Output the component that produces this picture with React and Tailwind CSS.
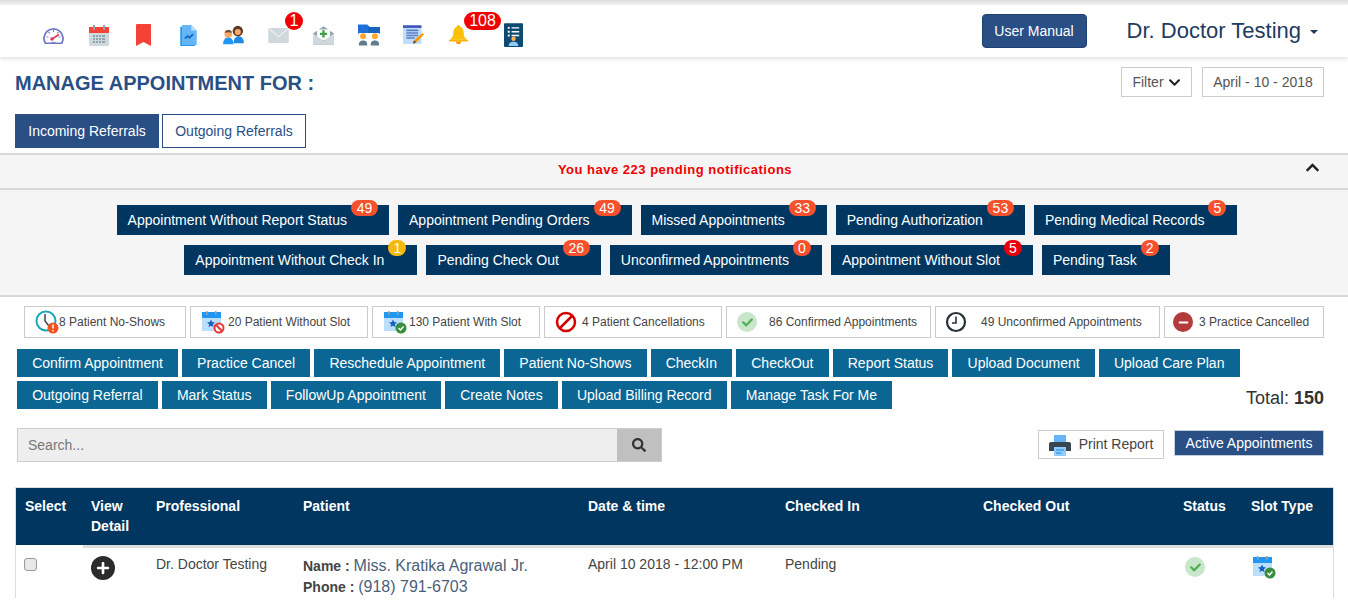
import { FaChevronDown, FaChevronUp, FaSearch, FaPlus, FaCheck, FaMinus } from 'react-icons/fa'

const Gauge = () => (
  <svg width="21" height="17" viewBox="2 1 20 17">
    <path d="M4 17.500a9.500 9.500 0 1 1 16 0z" fill="#fff" stroke="#6f78c8" strokeWidth="1.800" />
    <path d="M5 11h2M17 11h2M12 4v2M7 6l1.400 1.400M17 6l-1.400 1.400" stroke="#7c84cc" strokeWidth="1.200" />
    <path d="M10.500 13 17.500 8.500" stroke="#e53958" strokeWidth="1.600" />
    <circle cx="10.500" cy="13" r="1.800" fill="#e53958" />
    <path d="M10 16.500h4" stroke="#7c84cc" strokeWidth="1.200" />
  </svg>
)

const CalendarGrey = () => (
  <svg width="20" height="21" viewBox="2 1 20 21">
    <rect x="2" y="3" width="20" height="19" rx="1" fill="#cfd8dc" />
    <rect x="2" y="3" width="20" height="6" fill="#f44336" />
    <rect x="6" y="1" width="2" height="5" fill="#90a4ae" />
    <rect x="16" y="1" width="2" height="5" fill="#90a4ae" />
    <path d="M6 11h12v2H6zM6 14h12v2H6zM6 17h12v2H6z" fill="#90a4ae" />
    <path d="M8 11h1v8H8zM11 11h1v8h-1zM14 11h1v8h-1z" fill="#cfd8dc" />
  </svg>
)

const Bookmark = () => (
  <svg width="15" height="22" viewBox="0 0 15 22">
    <path d="M1 0h13a1 1 0 0 1 1 1v21l-7.500-4L0 22V1a1 1 0 0 1 1-1z" fill="#f44336" />
  </svg>
)

const DocChart = () => (
  <svg width="17" height="21" viewBox="3 1 18 23">
    <path d="M5 1h10l6 6v16H5z" fill="#64b5f6" />
    <path d="M3 3h2v20h14v1H3z" fill="#2196f3" />
    <path d="M15 1l6 6h-6z" fill="#bbdefb" />
    <path d="M8 16l3-3 2 2 4-4" fill="none" stroke="#1565c0" strokeWidth="2" />
  </svg>
)

const People = () => (
  <svg width="23" height="20" viewBox="0 1 26 23">
    <path d="M13 22c0-5 3-8 6-8s6 3 6 8z" fill="#1e88e5" />
    <circle cx="18" cy="8" r="6" fill="#5d3a28" />
    <circle cx="18" cy="9" r="3.500" fill="#f6a96b" />
    <path d="M1 23c0-5 3-8 6-8s6 3 6 8z" fill="#2196f3" />
    <circle cx="7" cy="11" r="4.500" fill="#f6a96b" />
    <path d="M3 10c0-4 8-5 8 0-3-1-5-1-8 0z" fill="#6d4c33" />
  </svg>
)

const Mail = () => (
  <svg width="21" height="15" viewBox="0 2 26 19">
    <rect x="0" y="2" width="26" height="19" rx="1.500" fill="#cfd8dc" />
    <path d="M1 3l12 10L25 3" fill="none" stroke="#eceff1" strokeWidth="1.500" />
  </svg>
)

const MailOpen = () => (
  <svg width="21" height="21" viewBox="0 1 26 23">
    <path d="M0 10 13 1l13 9v14H0z" fill="#90a4ae" />
    <rect x="5" y="5" width="16" height="13" fill="#fff" />
    <path d="M0 10l13 9 13-9v14H0z" fill="#cfd8dc" />
    <path d="M11.500 6h3v3h3v3h-3v3h-3v-3h-3V9h3z" fill="#43a047" />
  </svg>
)

const FolderPeople = () => (
  <svg width="22" height="22" viewBox="0 1 26 25">
    <path d="M0 1h11l3 3h12v11H0z" fill="#1e6fd9" />
    <path d="M12 4h14v11H12z" fill="#1565c0" />
    <rect x="0" y="11" width="26" height="5" rx="2" fill="#fff" />
    <circle cx="6" cy="15" r="3.500" fill="#ffa726" />
    <circle cx="20" cy="15" r="3.500" fill="#ffa726" />
    <path d="M1 26c0-5 2-6 5-6s5 1 5 6zM15 26c0-5 2-6 5-6s5 1 5 6z" fill="#607d8b" />
  </svg>
)

const Notepad = () => (
  <svg width="21" height="22" viewBox="0 1 25 23">
    <rect x="0" y="1" width="22" height="22" fill="#bbdefb" />
    <rect x="0" y="1" width="22" height="3" fill="#3f51b5" />
    <path d="M4 7h14M4 10h14M4 13h14M4 16h10" stroke="#5c7fc4" strokeWidth="1.800" />
    <path d="M12 23l1-4 10-9 2 2-9 9z" fill="#ff9800" />
    <path d="M12 23l1-4 3 2z" fill="#5d4037" />
  </svg>
)

const Bell = () => (
  <svg width="19" height="20" viewBox="0 1 22 23">
    <path d="M11 1c1.500 0 2 1 2 2 3 1 4 4 4 7 0 4 1 6 4 8H1c3-2 4-4 4-8 0-3 1-6 4-7 0-1 .500-2 2-2z" fill="#ffc107" />
    <rect x="0" y="18" width="22" height="2" rx="1" fill="#ffb300" />
    <path d="M8 20h6a3 3 0 0 1-6 0z" fill="#ff9800" />
  </svg>
)

const Contact = () => (
  <svg width="19" height="24" viewBox="0 0 20 25">
    <rect width="20" height="25" rx="1" fill="#0d4a72" />
    <path d="M4 4h2v2H4zM4 8h2v2H4zM4 12h2v2H4z" fill="#fff" />
    <path d="M8 5h8M8 9h8M8 13h8" stroke="#fff" strokeWidth="1.500" />
    <circle cx="10" cy="16.500" r="2.300" fill="#ffb74d" />
    <path d="M5 24c0-3.500 2-4.500 5-4.500s5 1 5 4.500z" fill="#90caf9" />
  </svg>
)

const ClockAlert = () => (
  <svg width="24" height="24" viewBox="0 0 24 24">
    <circle cx="11" cy="11" r="9.500" fill="#fff" stroke="#1aa7b8" strokeWidth="2" />
    <path d="M10 4v7l4 5" fill="none" stroke="#37474f" strokeWidth="1.500" />
    <circle cx="18" cy="18" r="5.500" fill="#f4511e" />
    <path d="M18 14.500v4M18 20v1.500" stroke="#fff" strokeWidth="1.500" />
  </svg>
)

const CalendarStar = ({ ok }) => (
  <svg width="24" height="24" viewBox="0 0 24 24">
    <rect x="1" y="2" width="19" height="19" fill="#bbdefb" />
    <rect x="1" y="2" width="19" height="6" fill="#2196f3" />
    <path d="M5 1h1.500v4H5zM14 1h1.500v4H14z" fill="#90a4ae" />
    <path d="M10 9.500l1.200 2.600 2.800.3-2.100 1.900.6 2.800-2.500-1.400-2.500 1.400.6-2.800L6 12.400l2.800-.3z" fill="#1565c0" />
    {ok ? (
      <>
        <circle cx="18" cy="18" r="5.500" fill="#388e3c" />
        <path d="M15.500 18l2 2 3-3.500" fill="none" stroke="#fff" strokeWidth="1.500" />
      </>
    ) : (
      <>
        <circle cx="18" cy="18" r="4.500" fill="#fff" stroke="#e53935" strokeWidth="2" />
        <path d="M15 15l6 6" stroke="#e53935" strokeWidth="2" />
      </>
    )}
  </svg>
)

const Cancelled = () => (
  <svg width="22" height="22" viewBox="0 0 22 22">
    <circle cx="11" cy="11" r="9" fill="none" stroke="#d50000" strokeWidth="2.500" />
    <path d="M5 17 17 5" stroke="#d50000" strokeWidth="2.500" />
  </svg>
)

const GreenCheck = () => (
  <span className="flex w-[20px] h-[20px] items-center justify-center rounded-full bg-[#c8e6c9] text-[#4caf50] text-[11px]">
    <FaCheck />
  </span>
)

const BlackClock = () => (
  <svg width="22" height="22" viewBox="0 0 22 22">
    <circle cx="11" cy="11" r="9" fill="#fff" stroke="#263238" strokeWidth="2.200" />
    <path d="M11 5.500V12H7" fill="none" stroke="#263238" strokeWidth="1.600" />
  </svg>
)

const StopIcon = () => (
  <span className="flex w-[20px] h-[20px] items-center justify-center rounded-full bg-[#b23c3c] text-white text-[11px]">
    <FaMinus />
  </span>
)

const Printer = () => (
  <svg width="22" height="22" viewBox="0 0 22 22">
    <rect x="5" y="1" width="12" height="7" fill="#64b5f6" />
    <path d="M2 8h18a2 2 0 0 1 2 2v7H0v-7a2 2 0 0 1 2-2z" fill="#37474f" />
    <rect x="5" y="13" width="12" height="9" fill="#90caf9" />
    <path d="M7 16h8M7 19h5" stroke="#1e88e5" strokeWidth="1.200" />
  </svg>
)

const navIcons = [Gauge, CalendarGrey, Bookmark, DocChart, People, Mail, MailOpen, FolderPeople, Notepad, Bell]

const pendingRows = [
  [
    { label: 'Appointment Without Report Status', count: 49, color: 'bg-[#f4512c]' },
    { label: 'Appointment Pending Orders', count: 49, color: 'bg-[#f4512c]' },
    { label: 'Missed Appointments', count: 33, color: 'bg-[#f4512c]' },
    { label: 'Pending Authorization', count: 53, color: 'bg-[#f4512c]' },
    { label: 'Pending Medical Records', count: 5, color: 'bg-[#f4512c]' },
  ],
  [
    { label: 'Appointment Without Check In', count: 1, color: 'bg-[#f5b80f]' },
    { label: 'Pending Check Out', count: 26, color: 'bg-[#f4512c]' },
    { label: 'Unconfirmed Appointments', count: 0, color: 'bg-[#f4512c]' },
    { label: 'Appointment Without Slot', count: 5, color: 'bg-[#e8000d]' },
    { label: 'Pending Task', count: 2, color: 'bg-[#f4512c]' },
  ],
]

const stats = [
  { label: '8 Patient No-Shows', icon: <ClockAlert />, width: 'w-[162px]', gap: 'gap-0', pad: 'pl-[10px]' },
  { label: '20 Patient Without Slot', icon: <CalendarStar />, width: 'w-[178px]', gap: 'gap-[3px]', pad: 'pl-[10px]' },
  { label: '130 Patient With Slot', icon: <CalendarStar ok />, width: 'w-[168px]', gap: 'gap-[2px]', pad: 'pl-[10px]' },
  { label: '4 Patient Cancellations', icon: <Cancelled />, width: 'w-[178px]', gap: 'gap-[5px]', pad: 'pl-[10px]' },
  { label: '86 Confirmed Appointments', icon: <GreenCheck />, width: 'w-[205px]', gap: 'gap-[12px]', pad: 'pl-[10px]' },
  { label: '49 Unconfirmed Appointments', icon: <BlackClock />, width: 'w-[225px]', gap: 'gap-[14px]', pad: 'pl-[9px]' },
  { label: '3 Practice Cancelled', icon: <StopIcon />, width: 'w-[160px]', gap: 'gap-[6px]', pad: 'pl-[8px]' },
]

const actionRows = [
  ['Confirm Appointment', 'Practice Cancel', 'Reschedule Appointment', 'Patient No-Shows', 'CheckIn', 'CheckOut', 'Report Status', 'Upload Document', 'Upload Care Plan'],
  ['Outgoing Referral', 'Mark Status', 'FollowUp Appointment', 'Create Notes', 'Upload Billing Record', 'Manage Task For Me'],
]

const columns = 'grid grid-cols-[67px_65px_147px_285px_197px_198px_200px_68px_90px]'

const headers = ['Select', 'View Detail', 'Professional', 'Patient', 'Date & time', 'Checked In', 'Checked Out', 'Status', 'Slot Type']

export default function App() {
  return (
    <div className="h-screen overflow-hidden bg-white font-['Liberation_Sans',Arial,sans-serif] text-[14px] text-[#444]">
      {/* top nav */}
      <div className="h-[5px] bg-gradient-to-b from-[#dcdcdc] to-[#f4f4f4]"></div>
      <div className="relative flex h-[52px] items-center pl-[31px] pr-[30px] shadow-[0_2px_4px_rgba(0,0,0,0.12)]">
        <div className="mt-[8px] flex items-center">
          {navIcons.map((Icon, i) => (
            <div key={i} className="relative flex h-[30px] w-[45px] items-center justify-center">
              <Icon />
              {i === 5 && (
                <span className="absolute left-[29px] top-[-8px] flex h-[18px] w-[18px] items-center justify-center rounded-full bg-[#f00000] text-[16px] text-white">1</span>
              )}
              {i === 9 && (
                <span className="absolute left-[28px] top-[-8px] flex h-[18px] w-[37px] items-center justify-center rounded-full bg-[#f00000] text-[16px] text-white">108</span>
              )}
            </div>
          ))}
          <div className="ml-[23px] flex items-center">
            <Contact />
          </div>
        </div>
        <button className="ml-auto h-[34px] w-[105px] rounded-[4px] border border-[#1f3f6e] bg-[#2a4f85] text-[14px] text-white">User Manual</button>
        <div className="mb-[2px] ml-[40px] flex items-center text-[22px] text-[#1f3b5f]">
          Dr. Doctor Testing
          <span className="ml-[9px] mt-[3px] h-0 w-0 border-x-[4px] border-t-[4px] border-x-transparent border-t-[#1f3b5f]"></span>
        </div>
      </div>

      {/* heading */}
      <div className="flex h-[57px] items-start justify-between pl-[15px] pr-[24px] pt-[10px]">
        <h1 className="mt-[3px] text-[20px] leading-[26px] font-bold text-[#2a4f85]">MANAGE APPOINTMENT FOR :</h1>
        <div className="flex gap-[10px]">
          <button className="flex h-[30px] w-[71px] items-center justify-center gap-[4px] border border-[#ccc] text-[#555]">
            Filter <FaChevronDown className="text-[13px] text-[#222]" />
          </button>
          <div className="flex h-[30px] w-[122px] items-center justify-center border border-[#ccc] text-[#555]">April - 10 - 2018</div>
        </div>
      </div>

      {/* tabs */}
      <div className="flex gap-[3px] pl-[15px]">
        <button className="h-[34px] w-[144px] bg-[#2a4f85] text-white">Incoming Referrals</button>
        <button className="h-[34px] w-[144px] border border-[#2a4f85] text-[#2a4f85]">Outgoing Referrals</button>
      </div>

      {/* notifications */}
      <div className="mt-[5px] border-y-2 border-[#d8d8d8] bg-[#f5f5f5]">
        <div className="relative flex h-[35px] items-center justify-center border-b-2 border-[#d8d8d8] pb-[4px] pl-[2px] text-[13px] font-bold text-[#f00000]">
          <span className="tracking-[0.5px]">You have 223 pending notifications</span>
          <FaChevronUp className="absolute right-[28px] top-[5px] text-[15px] text-[#222]" />
        </div>
        <div className="flex flex-col gap-[10px] pb-[20px] pl-[6px] pt-[15px]">
          {pendingRows.map((row, r) => (
            <div key={r} className="flex justify-center gap-[9px]">
              {row.map((item) => (
                <div key={item.label} className="flex h-[30px] items-center bg-[#003660] pl-[11px] pr-[11px] text-[14px] text-white">
                  {item.label}
                  <span className={`ml-[4px] mt-[-5px] flex h-[16px] self-start items-center justify-center rounded-full ${item.count > 9 ? 'w-[27px]' : 'w-[18px]'} ${item.color}`}>{item.count}</span>
                </div>
              ))}
            </div>
          ))}
        </div>
      </div>

      {/* stats */}
      <div className="mt-[9px] flex gap-[4px] pl-[24px]">
        {stats.map((s) => (
          <div key={s.label} className={`flex h-[32px] items-center border border-[#ccc] text-[12px] text-[#444] ${s.pad} ${s.width} ${s.gap}`}>
            {s.icon}
            <span>{s.label}</span>
          </div>
        ))}
      </div>

      {/* actions */}
      <div className="relative mt-[11px] flex flex-col gap-[4px] pl-[17px]">
        {actionRows.map((row, r) => (
          <div key={r} className="flex gap-[4px]">
            {row.map((label) => (
              <button key={label} className="h-[28px] bg-[#0b6694] px-[15.125px] text-[14px] text-white">{label}</button>
            ))}
          </div>
        ))}
        <div className="absolute right-[24px] top-[36px] text-[18px] text-[#333]">
          Total: <b>150</b>
        </div>
      </div>

      {/* search and print */}
      <div className="mt-[19px] flex items-start justify-between pl-[17px] pr-[24px]">
        <div className="flex h-[34px] w-[645px] border border-[#ccc] bg-[#eee]">
          <input placeholder="Search..." className="flex-1 bg-transparent pl-[10px] text-[14px] outline-none placeholder:text-[#777]" />
          <span className="flex w-[44px] items-center justify-center bg-[#c0c0c0] text-[14px] text-[#333]">
            <FaSearch />
          </span>
        </div>
        <div className="flex items-start gap-[10px] pt-[2px]">
          <button className="flex h-[29px] w-[126px] items-center justify-center gap-[8px] border border-[#ccc] text-[#444]">
            <Printer /> Print Report
          </button>
          <button className="h-[26px] w-[150px] border border-[#c4cedc] bg-[#2a4f85] text-white">Active Appointments</button>
        </div>
      </div>

      {/* table */}
      <div className="ml-[15px] mt-[25px] w-[1319px] border-x border-t border-[#ddd]">
        <div className={`${columns} h-[57px] bg-[#003660] text-[14px] leading-[20px] font-bold text-white`}>
          {headers.map((h, i) => (
            <div key={h} className={i === 0 ? 'pl-[9px] pt-[8px]' : 'pl-[8px] pr-[8px] pt-[8px]'}>{h}</div>
          ))}
        </div>
        <div className="ml-[67px] h-[3px] bg-[#ddd]"></div>
        <div className={`${columns} pt-[6px] text-[14px] text-[#444]`}>
          <div className="pl-[8px] pt-[2px]">
            <input type="checkbox" className="h-[13px] w-[13px] appearance-none rounded-[3px] border border-[#999] bg-[#e8e8e8]" />
          </div>
          <div className="pl-[8px] pt-[2px]">
            <span className="flex h-[24px] w-[24px] items-center justify-center rounded-full bg-[#2b2b2b] text-[14px] text-white">
              <FaPlus />
            </span>
          </div>
          <div className="pl-[8px]">Dr. Doctor Testing</div>
          <div className="pl-[8px] pt-[1px]">
            <div className="h-[21px] leading-[22px]">
              <b>Name : </b>
              <span className="text-[16px] leading-[16px] text-[#4a5f7a]">Miss. Kratika Agrawal Jr.</span>
            </div>
            <div className="h-[22px] leading-[22px]">
              <b>Phone : </b>
              <span className="text-[16px] leading-[16px] text-[#4a5f7a]">(918) 791-6703</span>
            </div>
          </div>
          <div className="pl-[8px]">April 10 2018 - 12:00 PM</div>
          <div className="pl-[8px]">Pending</div>
          <div></div>
          <div className="pl-[10px] pt-[3px]">
            <GreenCheck />
          </div>
          <div className="pl-[9px] pt-[1px]">
            <CalendarStar ok />
          </div>
        </div>
      </div>
    </div>
  )
}
